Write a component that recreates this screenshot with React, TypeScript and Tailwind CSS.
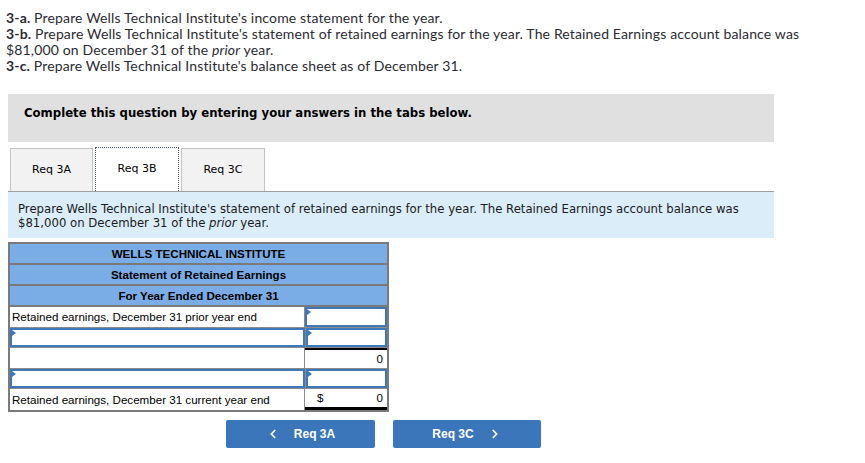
import { ChevronLeft, ChevronRight } from 'lucide-react';

function Flag() {
  return (
    <span className="absolute left-0 top-0 w-0 h-0 border-t-[3px] border-b-[3px] border-l-[4px] border-t-transparent border-b-transparent border-l-[#3c78c0]" />
  );
}

function InputCell({ className = '' }: { className?: string }) {
  return (
    <div className={`relative h-full border-2 border-[#3f78ba] bg-white ${className}`}>
      <Flag />
    </div>
  );
}

export default function App() {
  const verdana = { fontFamily: '"DejaVu Sans", Verdana, sans-serif' };
  const arial = { fontFamily: '"Liberation Sans", Arial, sans-serif' };

  return (
    <div className="w-[865px] h-[463px] bg-white overflow-hidden">
      {/* question text */}
      <div
        className="pt-[10px] pl-[6px] text-[14px] leading-4 tracking-[0.15px] text-[#2b2b33]"
        style={{ fontFamily: 'Lato, "Open Sans", sans-serif' }}
      >
        <p>
          <b>3-a.</b> Prepare Wells Technical Institute's income statement for the year.
        </p>
        <p>
          <b>3-b.</b> Prepare Wells Technical Institute's statement of retained earnings for the year. The Retained Earnings account balance was
        </p>
        <p>
          $81,000 on December 31 of the <i>prior</i> year.
        </p>
        <p>
          <b>3-c.</b> Prepare Wells Technical Institute's balance sheet as of December 31.
        </p>
      </div>

      <div className="mt-[20px] ml-[8px] w-[766px] h-[48px] bg-[#e0e0e0] pt-[12px] pl-[16px]">
        <p className="text-[11.7px] leading-[14px] font-bold text-black" style={verdana}>
          Complete this question by entering your answers in the tabs below.
        </p>
      </div>

      {/* tabs */}
      <div className="ml-[8px] w-[766px] mt-[5px] h-[45px] flex items-end border-b border-[#a0a0a0] pl-[2px] gap-[2px] text-[11px] text-black" style={verdana}>
        <div className="w-[83px] h-[43px] bg-[#f2f2f2] border border-b-0 border-[#c4c4c4] flex items-center justify-center">
          Req 3A
        </div>
        <div className="w-[84px] h-[44px] bg-white border border-b-0 border-dotted border-[#4a5a78] flex items-center justify-center">
          Req 3B
        </div>
        <div className="w-[84px] h-[43px] bg-[#f2f2f2] border border-b-0 border-[#c4c4c4] flex items-center justify-center">
          Req 3C
        </div>
      </div>

      <div className="ml-[8px] w-[766px] h-[46px] bg-[#dcedfa] pt-[10px] pl-[10px] text-[11.7px] leading-[14px] text-[#1a1a1a]" style={verdana}>
        <p>Prepare Wells Technical Institute's statement of retained earnings for the year. The Retained Earnings account balance was</p>
        <p>
          $81,000 on December 31 of the <i>prior</i> year.
        </p>
      </div>

      {/* statement */}
      <div className="ml-[8px] mt-[4px] w-[381px] border-2 border-[#7a7a7a] text-[11.6px] text-black" style={arial}>
        <div className="h-[21px] bg-[#7aade6] border-b-2 border-[#7a7a7a] flex items-center justify-center font-bold">
          WELLS TECHNICAL INSTITUTE
        </div>
        <div className="h-[21px] bg-[#7aade6] border-b-2 border-[#7a7a7a] flex items-center justify-center font-bold">
          Statement of Retained Earnings
        </div>
        <div className="h-[21px] bg-[#7aade6] border-b-2 border-[#7a7a7a] flex items-center justify-center font-bold">
          For Year Ended December 31
        </div>

        <div className="h-[21px] flex border-b border-[#8a8a8a]">
          <div className="w-[295px] border-r border-[#8a8a8a] flex items-center pl-[2px]">
            Retained earnings, December 31 prior year end
          </div>
          <div className="flex-1">
            <InputCell />
          </div>
        </div>
        <div className="h-[20px] flex border-b border-[#8a8a8a]">
          <div className="w-[295px]">
            <InputCell />
          </div>
          <div className="flex-1 border-l border-[#8a8a8a]">
            <InputCell />
          </div>
        </div>
        <div className="h-[21px] flex border-b border-[#8a8a8a]">
          <div className="w-[295px] border-r border-[#8a8a8a]" />
          <div className="flex-1 border-t-2 border-black flex items-center justify-end pr-[4px]">0</div>
        </div>
        <div className="h-[20px] flex border-b border-[#8a8a8a]">
          <div className="w-[295px]">
            <InputCell />
          </div>
          <div className="flex-1 border-l border-[#8a8a8a]">
            <InputCell />
          </div>
        </div>
        <div className="h-[21px] flex">
          <div className="w-[295px] border-r border-[#8a8a8a] flex items-center pl-[2px]">
            Retained earnings, December 31 current year end
          </div>
          <div className="flex-1 border-b-[3px] border-black flex items-center justify-between pl-[12px] pr-[4px]">
            <span>$</span>
            <span>0</span>
          </div>
        </div>
      </div>

      {/* nav buttons */}
      <div className="mt-[8px] ml-[226px] flex gap-[18px] text-[12px] font-bold text-white" style={arial}>
        <button className="w-[149px] h-[28px] bg-[#3b76bb] rounded-[2px] flex items-center justify-center gap-[14px]">
          <ChevronLeft className="w-[14px] h-[14px]" strokeWidth={3} />
          <span>Req 3A</span>
        </button>
        <button className="w-[148px] h-[28px] bg-[#3b76bb] rounded-[2px] flex items-center justify-center gap-[14px]">
          <span>Req 3C</span>
          <ChevronRight className="w-[14px] h-[14px]" strokeWidth={3} />
        </button>
      </div>
    </div>
  );
}
